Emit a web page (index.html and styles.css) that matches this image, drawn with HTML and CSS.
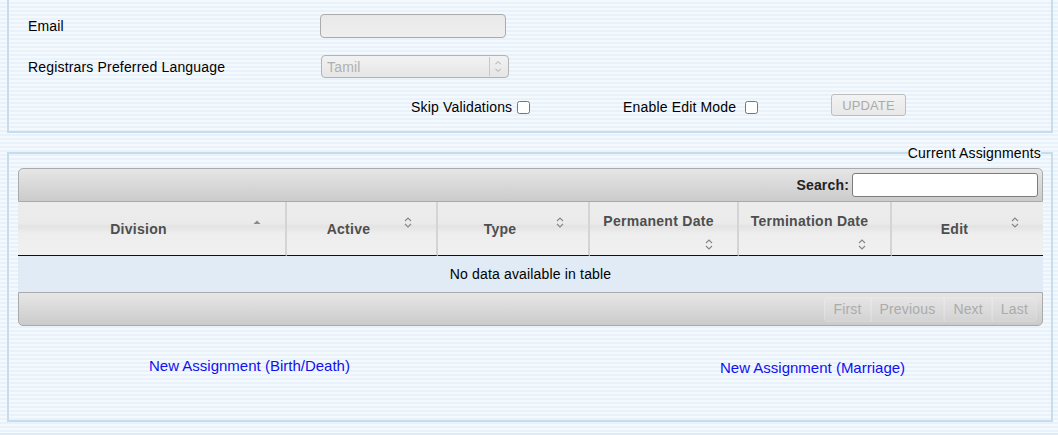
FILE: index.html
```html
<!DOCTYPE html>
<html>
<head>
<meta charset="utf-8">
<title>Registrar</title>
<link rel="stylesheet" href="styles.css">
</head>
<body>
<div class="page">
  <fieldset class="box details">
    <div class="form-row email-row">
      <label class="lbl">Email</label>
      <input class="txt" type="text" disabled>
    </div>
    <div class="form-row lang-row">
      <label class="lbl">Registrars Preferred Language</label>
      <div class="select">
        <span class="val">Tamil</span>
        <span class="sel-arrow">
          <svg width="18" height="21" viewBox="0 0 18 21"><polyline points="5,8 8,5 11,8" fill="none" stroke="#a6a6a6" stroke-width="1.1"/><polyline points="5,13 8,16 11,13" fill="none" stroke="#a6a6a6" stroke-width="1.1"/></svg>
        </span>
      </div>
    </div>
    <div class="opts">
      <label class="opt skip">Skip Validations <input type="checkbox"></label>
      <label class="opt edit">Enable Edit Mode <input type="checkbox"></label>
      <button class="update" disabled>UPDATE</button>
    </div>
  </fieldset>

  <fieldset class="box assign">
    <legend>Current Assignments</legend>
    <div class="dt">
      <div class="toolbar tb-top">
        <label class="search">Search: <input type="text"></label>
      </div>
      <table class="grid">
        <colgroup>
          <col style="width:269px"><col style="width:151px"><col style="width:152px"><col style="width:149px"><col style="width:153px"><col style="width:151px">
        </colgroup>
        <thead>
          <tr>
            <th>Division<span class="si"><svg width="16" height="16" viewBox="0 0 16 16"><path d="M4.5 10 L8 6.5 L11.5 10 Z" fill="#8a8a8a"/></svg></span></th>
            <th>Active<span class="si"><svg width="16" height="16" viewBox="0 0 16 16"><polyline points="5,7 8,4 11,7" fill="none" stroke="#858585" stroke-width="1.1"/><polyline points="5,10 8,13 11,10" fill="none" stroke="#858585" stroke-width="1.1"/></svg></span></th>
            <th>Type<span class="si"><svg width="16" height="16" viewBox="0 0 16 16"><polyline points="5,7 8,4 11,7" fill="none" stroke="#858585" stroke-width="1.1"/><polyline points="5,10 8,13 11,10" fill="none" stroke="#858585" stroke-width="1.1"/></svg></span></th>
            <th>Permanent Date<span class="si"><svg width="16" height="16" viewBox="0 0 16 16"><polyline points="5,7 8,4 11,7" fill="none" stroke="#858585" stroke-width="1.1"/><polyline points="5,10 8,13 11,10" fill="none" stroke="#858585" stroke-width="1.1"/></svg></span></th>
            <th>Termination Date<span class="si"><svg width="16" height="16" viewBox="0 0 16 16"><polyline points="5,7 8,4 11,7" fill="none" stroke="#858585" stroke-width="1.1"/><polyline points="5,10 8,13 11,10" fill="none" stroke="#858585" stroke-width="1.1"/></svg></span></th>
            <th class="last">Edit<span class="si"><svg width="16" height="16" viewBox="0 0 16 16"><polyline points="5,7 8,4 11,7" fill="none" stroke="#858585" stroke-width="1.1"/><polyline points="5,10 8,13 11,10" fill="none" stroke="#858585" stroke-width="1.1"/></svg></span></th>
          </tr>
        </thead>
        <tbody>
          <tr><td colspan="6" class="empty">No data available in table</td></tr>
        </tbody>
      </table>
      <div class="toolbar tb-bottom">
        <div class="pager">
          <span class="pbtn first">First</span><span class="pbtn">Previous</span><span class="pbtn">Next</span><span class="pbtn last">Last</span>
        </div>
      </div>
    </div>
    <div class="links">
      <div class="lcell"><a href="#" class="lnk">New Assignment (Birth/Death)</a></div>
      <div class="lcell second"><a href="#" class="lnk">New Assignment (Marriage)</a></div>
    </div>
  </fieldset>
  <div class="after"></div>
</div>
</body>
</html>
```

FILE: styles.css
```css
html, body {
  margin: 0;
  padding: 0;
}
body {
  width: 1058px;
  height: 435px;
  overflow: hidden;
  font-family: "Liberation Sans", Arial, sans-serif;
  font-size: 14px;
  letter-spacing: 0.17px;
  color: #000;
  background: repeating-linear-gradient(to bottom, #f4f9fd 0px, #f4f9fd 2px, #e9f2fa 2px, #e9f2fa 4px);
}
.page {
  padding: 0 5px 0 7px;
}
.box {
  border: 2px solid #c6ddee;
  margin: 0;
  min-width: 0;
}

/* ---------- details fieldset ---------- */
.details {
  margin-top: -10px;
  padding: 22px 0 15px 19px;
}
.form-row {
  display: flex;
  align-items: center;
  height: 24px;
  margin-bottom: 17px;
}
.lang-row {
  height: 23px;
  margin-bottom: 16px;
}
.lbl {
  width: 292px;
  flex: none;
}
.txt {
  box-sizing: border-box;
  width: 186px;
  height: 24px;
  margin: 0;
  border: 1px solid #ababab;
  border-radius: 4px;
  background: linear-gradient(#e9e9e9, #eeeeee);
}
.select {
  box-sizing: border-box;
  margin-left: 1px;
  width: 188px;
  height: 23px;
  display: flex;
  align-items: center;
  border: 1px solid #b3b3b3;
  border-radius: 4px;
  background: linear-gradient(#f2f2f2, #e6e6e6);
}
.val {
  flex: 1;
  padding-left: 5px;
  color: #b0b0b0;
}
.sel-arrow {
  display: flex;
  height: 19px;
  border-left: 1px solid #c9c9c9;
  align-items: center;
}
.sel-arrow svg {
  display: block;
  height: 19px;
}
.opts {
  display: flex;
  align-items: center;
  height: 22px;
  padding-left: 383px;
}
.opt {
  display: flex;
  align-items: center;
  white-space: pre;
  margin-top: 4px;
}
.opt input {
  width: 13px;
  height: 13px;
  margin: 0 3px 0 1px;
}
.skip {
  width: 212px;
}
.edit {
  width: 208px;
}
.edit input {
  margin-left: 5px;
}
.update {
  box-sizing: border-box;
  width: 75px;
  height: 22px;
  padding: 0;
  border: 1px solid #bdbdbd;
  border-radius: 3px;
  background: linear-gradient(#f3f3f3, #e8e8e8);
  color: #ababab;
  font-family: "Liberation Sans", Arial, sans-serif;
  font-size: 13px;
  letter-spacing: 0.1px;
}

/* ---------- assignments fieldset ---------- */
.assign {
  margin-top: 12px;
  padding: 7px 8px 0 9px;
}
.assign legend {
  margin-left: auto;
  margin-right: 2px;
  padding: 0;
  line-height: 16px;
}
.dt {
  width: 1025px;
}
.toolbar {
  box-sizing: border-box;
  height: 34px;
  border: 1px solid #aaaaaa;
  background: linear-gradient(#e6e6e6, #cbcbcb);
  display: flex;
  align-items: center;
  justify-content: flex-end;
}
.tb-top {
  border-radius: 5px 5px 0 0;
  padding-right: 4px;
}
.tb-bottom {
  border-radius: 0 0 5px 5px;
  padding-right: 5px;
}
.search {
  font-weight: bold;
  color: #222;
  display: flex;
  align-items: center;
}
.search input {
  box-sizing: border-box;
  width: 186px;
  height: 24px;
  margin: 0 0 0 3px;
  border: 1px solid #7c7c7c;
  border-radius: 3px;
  background: #fff;
}
.grid {
  width: 1025px;
  table-layout: fixed;
  border-collapse: separate;
  border-spacing: 0;
}
.grid th {
  box-sizing: border-box;
  height: 54px;
  padding: 0 20px 0 10px;
  line-height: 30px;
  text-align: center;
  vertical-align: middle;
  font-weight: bold;
  letter-spacing: 0.27px;
  color: #4e4e4e;
  border-right: 2px solid #d4d4d4;
  border-bottom: 1px solid #111;
  background: linear-gradient(to bottom, #ececec 0%, #ebebeb 40%, #e3e3e3 46%, #eeeeee 60%, #f0f0f0 100%);
}
.grid th.last {
  border-right: none;
}
.si {
  float: right;
  width: 16px;
  height: 16px;
}
.si svg {
  display: block;
}
.empty {
  height: 36px;
  padding: 0;
  text-align: center;
  background: #e0ebf5;
}
.pager {
  display: flex;
  height: 25px;
  border-radius: 4px;
  overflow: hidden;
}
.pbtn {
  box-sizing: border-box;
  height: 25px;
  line-height: 23px;
  padding: 0 8px;
  border: 1px solid rgba(255, 255, 255, 0.12);
  border-left-color: rgba(255, 255, 255, 0.22);
  background: rgba(255, 255, 255, 0.1);
  color: #ababab;
}
.links {
  display: grid;
  grid-template-columns: 571px 1fr;
  height: 94px;
  padding-top: 32px;
  box-sizing: border-box;
}
.lcell {
  padding-left: 131px;
  line-height: 16px;
}
.lcell.second {
  padding-top: 2px;
}
.lnk {
  font-size: 15px;
  letter-spacing: 0;
  color: #1010f0;
  text-decoration: none;
}
.after {
  margin: 11px -5px 0 -7px;
  height: 3px;
  background: #dfeaf6;
}
```
